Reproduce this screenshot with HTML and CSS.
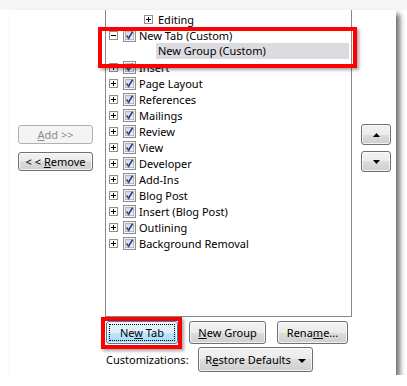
FILE: index.html
```html
<!DOCTYPE html>
<html lang="en">
<head>
    <meta charset="UTF-8">
    <title>Customize the Ribbon</title>
    <link rel="stylesheet" href="styles.css">
</head>
<body>
    <svg class="defs" width="0" height="0">
        <defs>
            <linearGradient id="cbFill" x1="0" y1="0" x2="1" y2="1">
                <stop offset="0" stop-color="#cfd2d6"/>
                <stop offset="1" stop-color="#f7f7f7"/>
            </linearGradient>
            <symbol id="check" viewBox="0 0 13 13">
                <rect x="0.5" y="0.5" width="12" height="12" fill="#f4f4f4" stroke="#8e8f8f"/>
                <rect x="2.5" y="2.5" width="8" height="8" fill="url(#cbFill)" stroke="#b4b7bb"/>
                <path d="M3.6 6.6 L5.6 9.2 L9.6 2.8" stroke="#2f4a9a" stroke-width="1.7" fill="none"/>
            </symbol>
            <symbol id="plus" viewBox="0 0 9 9">
                <rect x="0.5" y="0.5" width="8" height="8" fill="#fff" stroke="#8f8f8f"/>
                <path d="M2 4.5h5M4.5 2v5" stroke="#000"/>
            </symbol>
            <symbol id="minus" viewBox="0 0 9 9">
                <rect x="0.5" y="0.5" width="8" height="8" fill="#fff" stroke="#8f8f8f"/>
                <path d="M2 4.5h5" stroke="#000"/>
            </symbol>
        </defs>
    </svg>

    <div class="top-strip"></div>
    <div class="window">
        <div class="main">
            <div class="side left">
                <button class="btn disabled"><u>A</u>dd &gt;&gt;</button>
                <button class="btn">&lt; &lt; <u>R</u>emove</button>
            </div>

            <div class="tree">
                <div class="row group">
                    <svg class="exp" width="9" height="9"><use href="#plus"/></svg>
                    <span>Editing</span>
                </div>
                <div class="row">
                    <svg class="exp" width="9" height="9"><use href="#minus"/></svg>
                    <svg class="cb" width="13" height="13"><use href="#check"/></svg>
                    <span>New Tab (Custom)</span>
                </div>
                <div class="row group">
                    <span class="selected">New Group (Custom)</span>
                </div>
                <div class="row"><svg class="exp" width="9" height="9"><use href="#plus"/></svg><svg class="cb" width="13" height="13"><use href="#check"/></svg><span>Insert</span></div>
                <div class="row"><svg class="exp" width="9" height="9"><use href="#plus"/></svg><svg class="cb" width="13" height="13"><use href="#check"/></svg><span>Page Layout</span></div>
                <div class="row"><svg class="exp" width="9" height="9"><use href="#plus"/></svg><svg class="cb" width="13" height="13"><use href="#check"/></svg><span>References</span></div>
                <div class="row"><svg class="exp" width="9" height="9"><use href="#plus"/></svg><svg class="cb" width="13" height="13"><use href="#check"/></svg><span>Mailings</span></div>
                <div class="row"><svg class="exp" width="9" height="9"><use href="#plus"/></svg><svg class="cb" width="13" height="13"><use href="#check"/></svg><span>Review</span></div>
                <div class="row"><svg class="exp" width="9" height="9"><use href="#plus"/></svg><svg class="cb" width="13" height="13"><use href="#check"/></svg><span>View</span></div>
                <div class="row"><svg class="exp" width="9" height="9"><use href="#plus"/></svg><svg class="cb" width="13" height="13"><use href="#check"/></svg><span>Developer</span></div>
                <div class="row"><svg class="exp" width="9" height="9"><use href="#plus"/></svg><svg class="cb" width="13" height="13"><use href="#check"/></svg><span>Add-Ins</span></div>
                <div class="row"><svg class="exp" width="9" height="9"><use href="#plus"/></svg><svg class="cb" width="13" height="13"><use href="#check"/></svg><span>Blog Post</span></div>
                <div class="row"><svg class="exp" width="9" height="9"><use href="#plus"/></svg><svg class="cb" width="13" height="13"><use href="#check"/></svg><span>Insert (Blog Post)</span></div>
                <div class="row"><svg class="exp" width="9" height="9"><use href="#plus"/></svg><svg class="cb" width="13" height="13"><use href="#check"/></svg><span>Outlining</span></div>
                <div class="row"><svg class="exp" width="9" height="9"><use href="#plus"/></svg><svg class="cb" width="13" height="13"><use href="#check"/></svg><span>Background Removal</span></div>
            </div>

            <div class="side right">
                <button class="btn arrow"><svg width="7" height="4"><path d="M0 4 L3.5 0 L7 4Z" fill="#000"/></svg></button>
                <button class="btn arrow"><svg width="7" height="4"><path d="M0 0 L3.5 4 L7 0Z" fill="#000"/></svg></button>
            </div>
        </div>

        <div class="actions">
            <button class="btn focused">Ne<u>w</u> Tab</button>
            <button class="btn wide"><u>N</u>ew Group</button>
            <button class="btn rename">Rena<u>m</u>e...</button>
        </div>
        <div class="customs">
            <span class="label">Customizations:</span>
            <button class="btn restore">R<u>e</u>store Defaults <svg width="8" height="4"><path d="M0 0 L4 4 L8 0Z" fill="#000"/></svg></button>
        </div>

        <div class="mark mark-tab"></div>
        <div class="mark mark-btn"></div>
    </div>
</body>
</html>
```

FILE: styles.css
```css
body {
    margin: 0;
    background: #fff;
    font-family: "Noto Sans", "Open Sans", sans-serif;
    font-size: 11px;
    color: #000;
}
.defs {
    position: absolute;
}
.top-strip {
    height: 10px;
    background: #f6f6f6;
}
.window {
    position: relative;
    margin-left: 10px;
    width: 386px;
    height: 365px;
    background: #fff;
    box-shadow: 4px 4px 5px rgba(0, 0, 0, 0.55);
}
.main {
    display: flex;
    height: 307px;
}
.side {
    display: flex;
    flex-direction: column;
}
.side.left {
    width: 95px;
    padding: 115px 0 0 8px;
    box-sizing: border-box;
    gap: 8px;
}
.side.right {
    padding: 114px 0 0 9px;
    gap: 6px;
}
.tree {
    width: 247px;
    box-sizing: border-box;
    border: 1px solid #828790;
    border-top: none;
    padding-top: 1px;
}
.row {
    height: 16px;
    display: flex;
    align-items: center;
    padding-left: 3px;
    white-space: nowrap;
}
.row.group {
    padding-left: 38px;
}
.exp {
    margin-right: 5px;
}
.cb {
    margin-right: 3px;
}
.selected {
    display: block;
    width: 191px;
    height: 16px;
    line-height: 16px;
    margin-left: 12px;
    padding-left: 2px;
    background: #dcdce0;
}
.btn {
    font-family: inherit;
    font-size: 11px;
    color: #000;
    border: 1px solid #707070;
    border-radius: 3px;
    background: linear-gradient(#f2f2f2 0%, #ebebeb 50%, #dddddd 50%, #cfcfcf 100%);
    box-shadow: inset 0 0 0 1px rgba(255, 255, 255, 0.7);
    padding: 0;
    height: 19px;
    line-height: 15px;
    text-align: center;
}
.side.left .btn {
    width: 75px;
}
.btn.disabled {
    color: #8d8d8d;
    border-color: #adb2b5;
    background: #f4f4f4;
    box-shadow: none;
}
.btn.arrow {
    width: 30px;
    height: 21px;
    display: flex;
    align-items: center;
    justify-content: center;
}
.actions {
    display: flex;
    gap: 11px;
    padding: 4px 0 0 96px;
}
.actions .btn {
    height: 23px;
    width: 77px;
}
.btn.focused {
    width: 72px;
    border-color: #3c7fb1;
    background: linear-gradient(#eaf6fd 0%, #d9f0fc 50%, #bee6fd 50%, #a7d9f5 100%);
    outline: 1px dotted #000;
    outline-offset: -4px;
}
.btn.rename {
    width: 71px;
}
.customs {
    display: flex;
    align-items: center;
    padding: 3px 0 0 96px;
}
.label {
    width: 92px;
}
.btn.restore {
    width: 115px;
    height: 25px;
}
.btn.restore svg {
    margin-left: 4px;
    vertical-align: 1px;
}
.mark {
    position: absolute;
    border: 4px solid #f00;
    box-shadow: 2px 2px 3px rgba(0, 0, 0, 0.35);
}
.mark-tab {
    left: 88px;
    top: 17px;
    width: 251px;
    height: 33px;
}
.mark-btn {
    left: 91px;
    top: 307px;
    width: 73px;
    height: 24px;
}
```
